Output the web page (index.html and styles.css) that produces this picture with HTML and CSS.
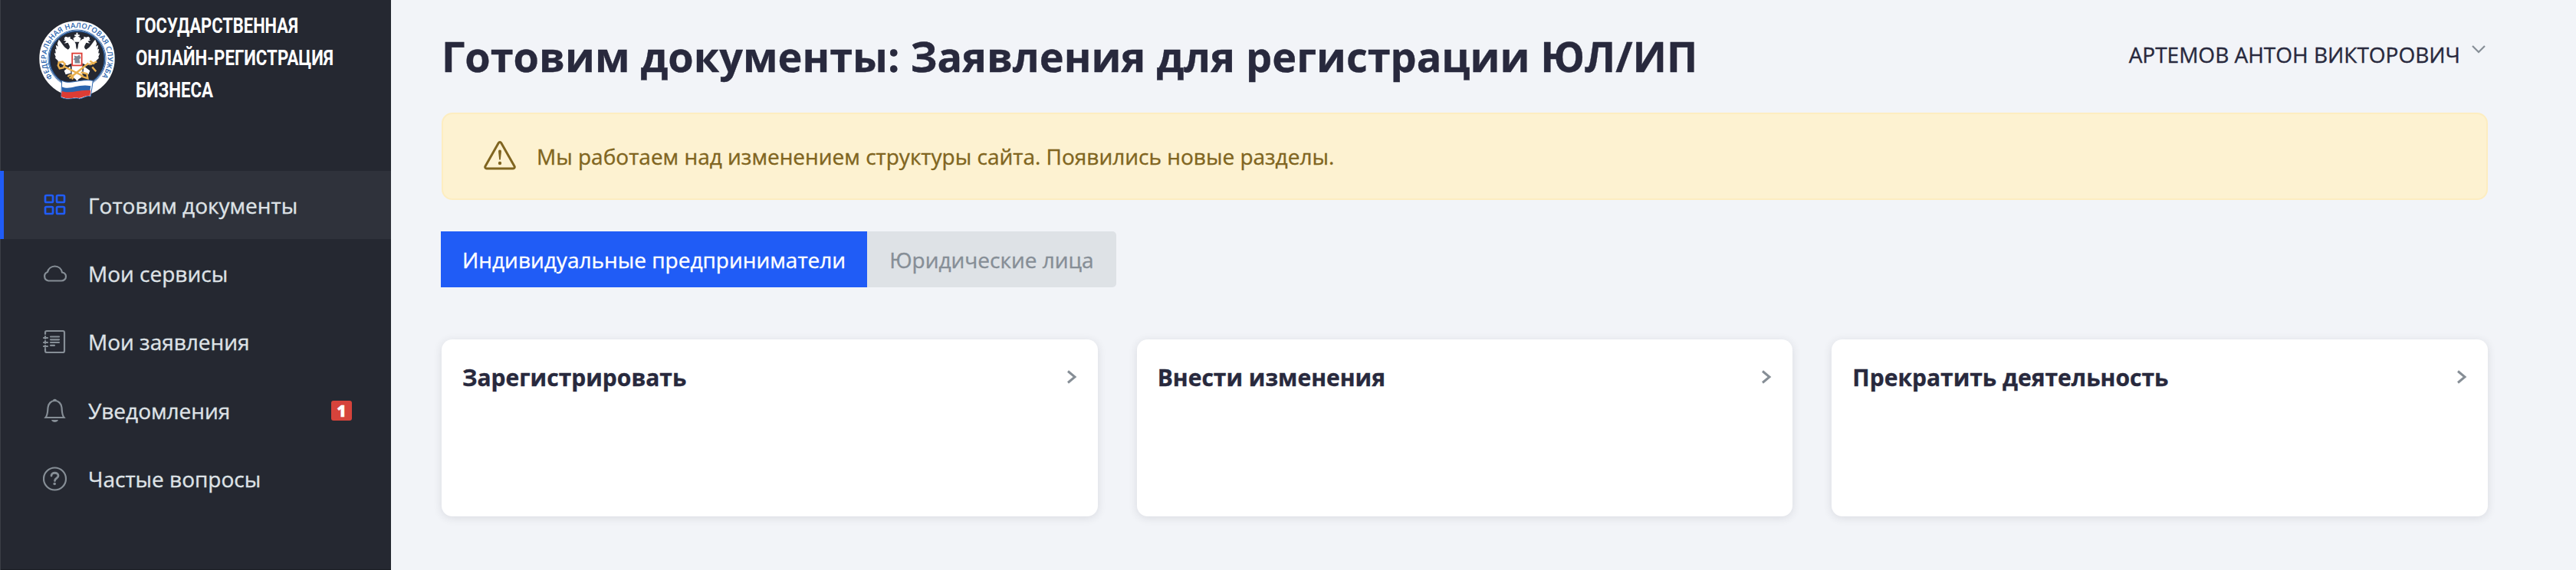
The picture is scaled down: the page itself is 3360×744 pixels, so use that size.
FILE: index.html
```html
<!DOCTYPE html>
<html lang="ru">
<head>
  <meta charset="UTF-8">
  <title>Государственная онлайн-регистрация бизнеса</title>
  <link rel="stylesheet" href="styles.css">
</head>
<body>

<aside class="sidebar">
  <a class="logo" href="#">
    <svg class="emblem" viewBox="0 0 100 104">
      <defs>
        <path id="ring" d="M18.1 74.900 A40.500 40.500 0 1 1 81.900 74.900" />
      </defs>
      <circle cx="50" cy="50" r="43.4" fill="none" stroke="#fff" stroke-width="12.6" />
      <circle cx="50" cy="50" r="38" fill="none" stroke="#2b65ae" stroke-width=".9" />
      <circle cx="50" cy="50" r="36.3" fill="none" stroke="#2b65ae" stroke-width="1.2" />
      <text class="ring-text"><textPath href="#ring" textLength="179">ФЕДЕРАЛЬНАЯ НАЛОГОВАЯ СЛУЖБА</textPath></text>
      <!-- eagle -->
      <g fill="#fff">
        <path d="M49 16h2v2.500h2.300v2H51l4 2.500-1.200 5h-7.600l-1.200-5 4-2.500h-2.300v-2H49z" />
        <path d="M50 38c-2-3-1-6-2-8-2-5-7-7-11-7l-5 3 4 1-3 3 5-1 2 4c1 2 0 4-2 5-6-3-8-9-12-13l-2 5 1 4-3-2 1 6-2-1 1 6-2 0 2 5-1 1 4 4 0 2 5 2 0 1 5 0 2 1 6-3 0 18 5 3 2 3 2-3 5-3 0-18 6 3 2-1 5 0 0-1 5-2 0-2 4-4-1-1 2-5-2 0 1-6-2 1 1-6-3 2 1-4-2-5c-4 4-6 10-12 13-2-1-3-3-2-5l2-4 5 1-3-3 4-1-5-3c-4 0-9 2-11 7-1 2 0 5-2 8z" />
        <path d="M33 23l2-2 3 1 3-1 0 4-7 0zM67 23l-2-2-3 1-3-1 0 4 7 0z" />
        <path d="M41 60l-8 6 2 5 7-2zM59 60l8 6-2 5-7-2z" />
      </g>
      <rect x="43.600" y="43" width="12.600" height="16" fill="#fff" stroke="#dc3c34" stroke-width="1.800" />
      <path d="M46 46l4 1 3-2 2 4-2 2 1 5-7 0 0-4-2-1 2-2z" fill="#7c8794" />
      <!-- crossed keys -->
      <g fill="none" stroke="#e9b04e" stroke-width="2.400">
        <path d="M32 60l26 13M55 68l8 2 1 6-9-3M38 74c3-6 10 0 5 3M40 76l25-20" />
        <path d="M26 55l5-1 3 3-2 5-5 1-2-4zM67 53l6 4M70 61l5 6M66 58l10-4" />
      </g>
      <!-- flag -->
      <path d="M30 79c11 6 24-3 41 0l-3 21c-5-2-9 2-15 3-5-3-14 3-24-2z" fill="#fff" stroke="#2b65ae" stroke-width="1" />
      <path d="M30 87c11 5 20-4 38-1l-1 7c-13-3-25 5-37 1z" fill="#2b65ae" />
      <path d="M30 93c12 4 24-3 38-1l-1 7c-5-1-10 3-15 3-6-2-14 3-23-2z" fill="#dc3c34" />
    </svg>
    <svg class="logo-title" viewBox="0 0 262 126">
      <text x="0" y="28" textLength="212" lengthAdjust="spacingAndGlyphs">ГОСУДАРСТВЕННАЯ</text>
      <text x="0" y="70" textLength="258" lengthAdjust="spacingAndGlyphs">ОНЛАЙН-РЕГИСТРАЦИЯ</text>
      <text x="0" y="112" textLength="101" lengthAdjust="spacingAndGlyphs">БИЗНЕСА</text>
    </svg>
  </a>

  <nav class="menu">
    <a class="menu-item active" href="#">
      <svg class="menu-icon" viewBox="0 0 32 32">
        <rect x="3" y="3" width="10" height="9" rx="1.500" />
        <rect x="18" y="3" width="10" height="9" rx="1.500" />
        <rect x="3" y="18" width="10" height="9" rx="1.500" />
        <rect x="18" y="18" width="10" height="9" rx="1.500" />
      </svg>
      <span>Готовим документы</span>
    </a>
    <a class="menu-item" href="#">
      <svg class="menu-icon" viewBox="0 0 32 32">
        <path d="M7 25.500a6 6 0 0 1-1-11.500c1-4 4.500-7.500 9.500-7.500s8.500 3.500 9.500 8c3 .5 5 2.500 5 5.500s-2.500 5.500-6 5.500z" />
      </svg>
      <span>Мои сервисы</span>
    </a>
    <a class="menu-item" href="#">
      <svg class="menu-icon" viewBox="0 0 32 32">
        <path d="M3 6V4a2 2 0 0 1 2-2h21a2 2 0 0 1 2 2v24a2 2 0 0 1-2 2H5a2 2 0 0 1-2-2v-3M3 9v3M3 15v3M3 21v2M1 11h5M1 17h5M1 22h5M10 9.500h11M10 13.300h11M10 17h11M10 20.800h5" />
      </svg>
      <span>Мои заявления</span>
    </a>
    <a class="menu-item" href="#">
      <svg class="menu-icon" viewBox="0 0 32 32">
        <path d="M3.500 25c3-4 2.500-8 3-13 .5-5 4-9 9-9s8.500 4 9 9c.5 5 0 9 3 13z" />
        <path class="solid" d="M13 3c0-3 5-3 5 0zM11 28h9c-1 4-8 4-9 0z" />
      </svg>
      <span>Уведомления</span>
      <b class="badge">1</b>
    </a>
    <a class="menu-item" href="#">
      <svg class="menu-icon" viewBox="0 0 32 32">
        <circle cx="15.500" cy="16" r="14.500" />
        <path class="bold" d="M11 12c0-5 9-5 9 0 0 3.500-4.500 3-4.500 6.500" />
        <circle class="solid" cx="15.200" cy="22.500" r="1.800" />
      </svg>
      <span>Частые вопросы</span>
    </a>
  </nav>
</aside>

<main class="content">
  <header class="header">
    <h1>Готовим документы: Заявления для регистрации ЮЛ/ИП</h1>
    <a class="user" href="#">
      <span>АРТЕМОВ АНТОН ВИКТОРОВИЧ</span>
      <svg class="user-arrow" viewBox="0 0 18 12"><path d="M1 1l8 8 8-8" /></svg>
    </a>
  </header>

  <div class="alert">
    <svg class="alert-icon" viewBox="0 0 42 38">
      <path d="M19.300 2.500a2 2 0 0 1 3.400 0l17.300 30.500a2 2 0 0 1-1.700 3H3.700a2 2 0 0 1-1.700-3z" />
      <path class="mark" d="M19 13.500a2 2 0 0 1 4 0l-1.200 11h-1.600z" />
      <circle class="mark" cx="21" cy="29" r="2.200" />
    </svg>
    <span>Мы работаем над изменением структуры сайта. Появились новые разделы.</span>
  </div>

  <div class="tabs">
    <button class="tab selected">Индивидуальные предприниматели</button>
    <button class="tab">Юридические лица</button>
  </div>

  <div class="cards">
    <a class="card" href="#">
      <h2>Зарегистрировать</h2>
      <svg class="card-arrow" viewBox="0 0 14 18"><path d="M2 1.500l9 7.500-9 7.500" /></svg>
    </a>
    <a class="card" href="#">
      <h2>Внести изменения</h2>
      <svg class="card-arrow" viewBox="0 0 14 18"><path d="M2 1.500l9 7.500-9 7.500" /></svg>
    </a>
    <a class="card" href="#">
      <h2>Прекратить деятельность</h2>
      <svg class="card-arrow" viewBox="0 0 14 18"><path d="M2 1.500l9 7.500-9 7.500" /></svg>
    </a>
  </div>
</main>

</body>
</html>
```
FILE: styles.css
```css
* {
  box-sizing: border-box;
}

body {
  margin: 0;
  display: flex;
  height: 744px;
  overflow: hidden;
  background: #f2f4f8;
  color: #28293d;
  font-family: 'Open Sans', sans-serif;
  font-size: 28px;
  -webkit-text-stroke: 0.35px;
}

a {
  color: inherit;
  text-decoration: none;
}

/* sidebar */
.sidebar {
  width: 510px;
  flex-shrink: 0;
  background: #252831;
  box-shadow: inset 1px 0 #3b3e46, inset 0 -1px #1b1d24;
}

.logo {
  display: flex;
  align-items: flex-start;
  height: 223px;
  padding-left: 51px;
}

.emblem {
  width: 99px;
  height: 103px;
  margin-top: 27px;
}

.ring-text {
  font-size: 9.5px;
  font-weight: 600;
  fill: #2b65ae;
  -webkit-text-stroke: 0;
}

.logo-title {
  width: 262px;
  height: 126px;
  margin: 15px 0 0 27px;
  overflow: visible;
  font-family: Roboto, sans-serif;
  font-size: 28.5px;
  font-weight: 700;
  fill: #fff;
  -webkit-text-stroke: 0.8px #fff;
}

.menu-item {
  display: flex;
  align-items: center;
  height: 89.4px;
  padding: 0 51px;
  border-left: 5px solid transparent;
  color: #dee2e6;
}

.menu-item.active {
  background: #2f323b;
  border-left-color: #205cf6;
}

.menu-icon {
  width: 32px;
  height: 32px;
  margin-right: 27px;
  fill: none;
  stroke: #868e96;
  stroke-width: 2.2;
  stroke-linecap: round;
}

.active .menu-icon {
  stroke: #205cf6;
  stroke-width: 2.7;
}

.menu-icon .bold {
  stroke-width: 2.8;
}

.menu-icon .solid {
  fill: #868e96;
  stroke: none;
}

.badge {
  width: 27px;
  height: 26px;
  margin-left: auto;
  border-radius: 3px;
  background: #d6433b;
  color: #fff;
  font-size: 21px;
  font-weight: 800;
  line-height: 26px;
  text-align: center;
}

/* content */
.content {
  flex: 1;
  padding: 0 115px 0 66px;
}

.header {
  display: flex;
  justify-content: space-between;
  height: 147px;
}

h1 {
  margin: 35px 0 0;
  font-size: 54px;
  font-weight: 700;
  line-height: 76px;
}

.user {
  display: flex;
  margin-top: 52px;
  padding-right: 3px;
  line-height: 38px;
}

.user-arrow {
  width: 18px;
  height: 12px;
  margin: 7px 0 0 15px;
  fill: none;
  stroke: #868e96;
  stroke-width: 2.2;
}

.alert {
  display: flex;
  align-items: center;
  height: 114px;
  padding-left: 53px;
  border: 2px solid #fdedc0;
  border-radius: 14px;
  background: #fdf2d1;
  color: #806520;
}

.alert-icon {
  width: 42px;
  height: 38px;
  margin: -3px 27px 0 0;
  fill: none;
  stroke: #806520;
  stroke-width: 3;
}

.alert-icon .mark {
  fill: #806520;
  stroke: none;
}

.tabs {
  display: flex;
  margin: 41px 0 68px -1px;
}

.tab {
  height: 73px;
  padding: 0 29px;
  border: none;
  border-radius: 0 5px 5px 0;
  background: #dee2e6;
  color: #868e96;
  font-family: inherit;
  font-size: 28px;
  -webkit-text-stroke: inherit;
}

.tab.selected {
  padding: 0 28px;
  border-radius: 0;
  background: #205cf6;
  color: #fff;
}

.cards {
  display: grid;
  grid-template-columns: repeat(3, 1fr);
  gap: 51px;
}

.card {
  display: flex;
  align-items: flex-start;
  justify-content: space-between;
  height: 231px;
  padding: 30px 27px;
  border-radius: 14px;
  background: #fff;
  box-shadow: 0 2px 12px rgba(40, 41, 61, 0.12);
}

h2 {
  margin: 0;
  font-size: 30px;
  font-weight: 700;
  line-height: 40px;
}

.card-arrow {
  width: 14px;
  height: 18px;
  margin-top: 10px;
  fill: none;
  stroke: #868e96;
  stroke-width: 3;
}
```
